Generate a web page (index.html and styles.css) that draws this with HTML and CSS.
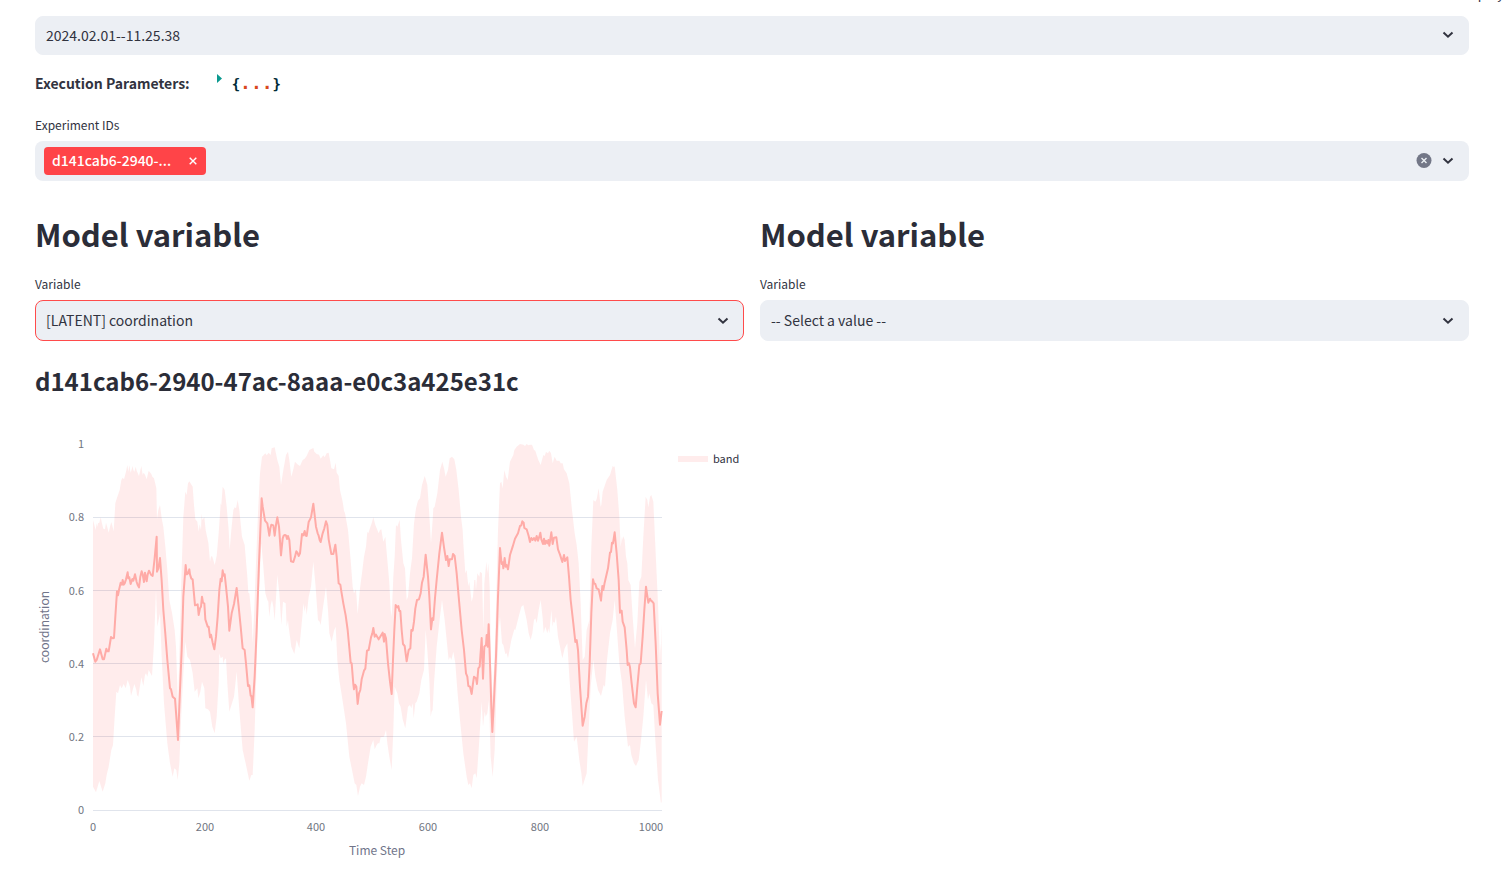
FILE: index.html
```html
<!DOCTYPE html>
<html lang="en">
<head>
<meta charset="utf-8">
<title>Experiment results</title>
<link rel="stylesheet" href="styles.css">
</head>
<body>
<header class="topbar"><button class="deploy" type="button">Deploy</button></header>
<main class="page">
  <div class="select select-run">
    <select aria-label="Run"><option>2024.02.01--11.25.38</option></select>
    <svg class="chevron" viewBox="0 0 12 8" aria-hidden="true"><path d="M1.5 1.5 6 5.7l4.5-4.2"/></svg>
  </div>

  <section class="params">
    <strong>Execution Parameters:</strong>
    <button class="json" type="button" aria-label="Expand parameters">
      <svg class="json-arrow" viewBox="0 0 5 9" aria-hidden="true"><path d="M0 0v9l5-4.5z"/></svg>
      <span class="json-body">{<span class="json-dots">...</span>}</span>
    </button>
  </section>

  <section class="field">
    <label class="label" for="experiments">Experiment IDs</label>
    <div class="multi">
      <span class="tag">
        <span class="tag-text">d141cab6-2940-...</span>
        <button class="tag-close" type="button" aria-label="Remove experiment"><svg viewBox="0 0 8 8"><path d="M.7.7l6.6 6.6M7.3.7L.7 7.3"/></svg></button>
      </span>
      <input class="multi-input" id="experiments" type="text">
      <button class="clear" type="button" aria-label="Clear all"><svg viewBox="0 0 16 16"><circle cx="8" cy="7.5" r="7.5"/><path d="M5.5 5l5 5M10.5 5l-5 5"/></svg></button>
      <svg class="chevron" viewBox="0 0 12 8" aria-hidden="true"><path d="M1.5 1.5 6 5.7l4.5-4.2"/></svg>
    </div>
  </section>

  <div class="columns">
    <section>
      <h1>Model variable</h1>
      <label class="label" for="var-left">Variable</label>
      <div class="select select-active">
        <select id="var-left"><option>[LATENT] coordination</option></select>
        <svg class="chevron" viewBox="0 0 12 8" aria-hidden="true"><path d="M1.5 1.5 6 5.7l4.5-4.2"/></svg>
      </div>
      <h2>d141cab6-2940-47ac-8aaa-e0c3a425e31c</h2>
      <svg class="chart" viewBox="0 0 709 450" role="img" aria-label="Coordination over time">
        <g class="grid">
          <path d="M58 97.5h569M58 170.5h569M58 243.5h569M58 316.5h569M58 390.5h569"/>
        </g>
        <g transform="translate(45 10) scale(.33333)">
          <path class="band" d="M39 270L47 300 50 280 52 290 54 280 58 278 62 262 66 280 70 296 75 298 78 278 82 292 86 308 90 290 94 276 98 292 101 304 106 220 110 206 114 195 119 180 124 150 128 143 132 148 138 125 142 105 145 125 148 106 152 128 158 108 160 120 163 125 167 110 170 122 177 138 184 108 188 135 191 128 195 134 200 148 206 122 214 132 217 140 222 145 229 175 231 268 235 240 240 225 245 265 250 290 256 350 262 420 268 510 276 548 284 600 288 650 294 830 298 680 304 450 310 260 316 185 320 195 324 160 328 154 338 170 342 225 346 268 352 275 356 305 359 283 363 300 365 250 367 270 373 262 377 300 385 338 390 395 393 380 396 378 400 390 404 405 410 378 416 310 422 220 424 225 428 170 434 180 440 230 446 300 449 360 454 300 460 240 464 232 468 235 473 210 478 240 486 320 494 345 502 440 505 488 508 490 515 560 518 640 522 560 528 400 534 250 540 130 546 80 556 70 560 76 566 68 572 75 575 55 584 52 592 90 598 110 603 165 610 120 618 75 624 65 628 90 634 140 640 118 642 108 645 95 652 103 660 108 668 90 674 86 680 78 688 60 700 54 703 65 710 72 717 74 722 86 730 76 734 82 740 70 746 68 750 90 754 115 762 118 767 98 770 128 776 138 780 180 788 215 792 242 795 250 804 300 812 390 818 470 822 490 828 478 833 552 840 475 846 430 852 380 858 350 862 305 865 310 868 300 875 280 880 262 886 285 896 310 900 300 904 298 910 335 916 320 922 390 928 460 932 540 935 560 940 440 944 380 948 285 952 290 959 270 963 330 970 400 975 415 980 510 984 500 990 430 996 385 1002 280 1008 235 1012 220 1014 212 1020 205 1026 165 1034 138 1037 147 1042 165 1047 240 1053 340 1058 270 1060 235 1064 230 1072 190 1080 120 1087 95 1092 115 1097 140 1104 120 1109 85 1116 80 1123 88 1129 120 1136 180 1143 260 1148 300 1150 340 1156 430 1160 420 1162 440 1165 468 1168 455 1175 515 1179 500 1183 450 1186 450 1188 480 1192 430 1198 440 1200 425 1206 430 1210 600 1213 460 1219 395 1222 430 1225 400 1229 470 1233 700 1237 800 1243 700 1249 500 1254 300 1260 160 1264 155 1268 175 1273 120 1278 140 1283 150 1290 95 1300 75 1303 60 1310 50 1320 42 1330 44 1335 48 1340 42 1345 46 1350 44 1356 44 1362 60 1366 62 1370 75 1375 90 1382 105 1390 75 1394 78 1398 66 1404 70 1408 62 1413 70 1418 100 1424 80 1430 92 1438 92 1442 100 1448 100 1452 118 1460 130 1468 160 1476 240 1484 310 1490 345 1496 400 1502 520 1508 690 1514 680 1520 600 1528 570 1534 350 1540 210 1546 215 1550 208 1556 175 1562 230 1564 225 1568 185 1580 150 1590 135 1598 108 1602 112 1604 108 1612 180 1618 260 1622 350 1626 320 1628 330 1630 318 1634 330 1638 380 1642 400 1645 450 1652 465 1658 560 1665 655 1672 580 1678 455 1684 440 1690 320 1697 200 1702 210 1705 232 1710 200 1714 195 1720 215 1727 370 1734 520 1740 700 1742 640 1743 660 1745 580V1115L1743 1120 1734 1050 1726 930 1720 825 1714 820 1708 790 1704 810 1698 750 1690 860 1682 940 1676 990 1668 1008 1662 1000 1654 975 1650 945 1644 950 1634 860 1626 760 1618 700 1610 590 1604 510 1598 570 1590 610 1580 700 1575 770 1571 765 1563 798 1554 780 1546 740 1540 690 1532 770 1526 900 1520 1030 1508 1068 1504 1030 1498 990 1490 920 1482 935 1476 850 1468 740 1462 640 1454 655 1447 685 1434 620 1428 560 1424 578 1420 575 1418 590 1414 540 1408 610 1405 595 1402 610 1396 590 1391 610 1388 565 1382 510 1376 540 1370 580 1366 565 1362 570 1357 610 1352 630 1346 610 1340 570 1330 525 1324 530 1316 560 1306 600 1303 598 1294 630 1284 685 1280 670 1276 672 1270 645 1266 640 1260 560 1256 600 1250 760 1244 960 1238 1040 1232 980 1227 810 1222 850 1217 860 1214 845 1209 890 1205 815 1196 960 1190 1045 1186 1030 1180 1035 1175 1075 1170 1060 1165 1065 1160 1040 1150 970 1140 870 1132 780 1126 700 1120 665 1114 690 1110 680 1106 690 1102 650 1094 570 1086 510 1080 560 1070 650 1062 760 1058 840 1055 845 1052 860 1048 750 1042 660 1037 600 1032 720 1024 750 1018 790 1010 815 1006 820 1001 865 998 820 994 835 990 825 984 830 976 895 968 868 962 830 957 820 952 790 944 770 940 900 935 1020 928 980 922 940 918 900 912 920 902 922 898 940 894 940 890 945 884 958 880 930 872 950 864 1000 858 1040 852 1065 845 1060 840 1070 834 1098 829 1065 824 1060 818 1030 808 980 798 880 786 800 778 750 772 690 767 590 762 602 755 635 748 610 744 540 738 470 728 540 722 585 719 575 714 570 706 460 700 395 693 470 686 500 680 555 677 525 674 545 670 520 668 550 658 655 650 630 643 672 634 650 626 590 624 570 620 590 617 520 609 515 604 585 598 490 592 435 584 572 580 530 576 510 572 525 568 560 565 515 562 510 556 490 550 410 544 340 536 500 530 700 524 900 518 1035 514 1035 508 1052 498 1005 488 960 478 840 470 725 462 800 448 845 442 760 438 685 433 690 430 702 428 680 422 685 418 670 416 760 410 860 404 910 397 890 390 845 384 838 376 835 373 775 366 755 361 785 355 805 352 775 344 785 338 730 330 690 322 680 316 635 310 730 304 850 298 1000 293 1050 289 1020 283 1015 278 1040 270 1000 262 940 252 820 245 680 240 550 232 590 228 480 222 640 216 738 206 720 202 740 198 730 195 735 190 768 184 742 175 800 171 795 169 780 163 762 153 798 150 770 143 750 137 775 131 762 125 775 120 765 114 790 109 785 104 860 99 945 94 960 86 1010 80 1035 76 1060 68 1085 58 1053 48 1087 39 1070Z"/>
          <path class="mean" d="M39 670L46 695 50 690 60 658 68 688 72 688 79 656 82 664 86 664 93 621 98 625 102 624 106 560 111 484 114 496 117 480 122 458 126 464 128 450 131 464 134 460 138 448 143 427 145 445 148 442 152 462 157 447 160 452 165 433 170 456 173 465 177 472 181 440 185 424 188 433 192 456 195 428 200 454 203 434 207 422 213 434 218 438 224 384 230 320 231 425 235 416 240 384 245 452 250 540 256 612 262 690 270 775 273 778 278 800 285 806 289 860 294 930 298 830 305 660 310 500 317 405 320 433 324 430 328 418 330 433 334 446 338 448 345 526 353 523 356 555 360 535 363 530 366 500 369 518 373 520 376 568 383 590 386 590 390 622 393 614 398 638 403 658 408 620 413 560 418 480 422 446 425 454 428 421 431 437 434 433 438 470 444 530 448 602 455 550 462 522 470 474 476 530 482 590 488 655 494 660 498 700 504 768 508 766 512 797 514 797 518 832 524 740 530 600 537 400 545 205 548 230 555 272 562 280 564 292 568 317 571 295 574 284 580 286 584 317 588 285 592 262 597 290 603 376 608 326 611 317 615 315 618 316 621 327 624 318 628 330 633 394 640 396 645 380 649 364 652 367 656 378 660 370 666 312 670 316 674 303 677 317 680 318 686 276 693 262 700 221 708 290 713 310 716 317 719 330 722 336 728 310 733 295 738 274 742 285 746 328 754 372 760 372 766 344 770 380 776 460 781 464 784 484 790 520 797 556 803 600 808 654 812 698 815 700 820 762 822 778 825 764 829 770 833 822 837 790 841 780 845 748 852 722 856 716 861 662 866 660 873 622 877 610 880 594 884 620 888 614 896 628 902 618 908 608 912 635 914 612 918 625 924 700 930 755 935 792 939 690 943 600 947 525 952 532 955 528 958 543 961 543 965 600 969 642 974 648 980 694 986 660 991 655 994 600 998 602 1002 575 1006 535 1011 510 1017 508 1022 490 1026 458 1031 440 1037 374 1044 440 1048 500 1053 598 1057 565 1060 570 1065 504 1070 450 1078 370 1086 308 1092 352 1098 390 1102 378 1106 408 1109 388 1116 388 1119 372 1124 378 1130 430 1136 500 1145 600 1152 660 1158 730 1162 740 1165 768 1170 770 1175 792 1179 760 1182 740 1188 745 1191 762 1195 715 1199 710 1205 624 1209 746 1213 650 1218 645 1220 615 1223 650 1226 583 1230 700 1234 830 1237 906 1242 810 1248 680 1254 500 1260 354 1265 402 1268 397 1270 415 1274 384 1277 410 1280 405 1284 418 1290 375 1298 350 1305 326 1314 310 1320 288 1324 286 1327 274 1331 278 1333 294 1340 298 1346 318 1350 336 1354 324 1358 330 1362 324 1366 332 1370 318 1374 332 1378 320 1381 308 1384 328 1389 342 1392 326 1395 342 1398 332 1402 340 1405 330 1408 347 1414 307 1418 342 1422 323 1429 322 1434 358 1440 374 1447 396 1452 375 1455 393 1462 382 1467 440 1472 510 1480 580 1486 636 1490 630 1494 660 1500 770 1508 887 1514 860 1519 820 1524 800 1529 700 1534 550 1539 448 1542 460 1546 462 1550 475 1556 478 1563 512 1567 468 1570 480 1574 458 1584 415 1590 368 1593 366 1596 338 1599 340 1604 307 1610 370 1616 450 1620 548 1625 542 1628 575 1634 592 1640 660 1643 705 1647 700 1650 712 1655 760 1662 820 1667 832 1672 770 1678 705 1682 700 1688 620 1693 540 1698 470 1701 492 1705 518 1710 506 1713 512 1717 515 1721 520 1727 640 1733 790 1740 884 1745 843"/>
        </g>
        <g class="ticks ticks-y">
          <text x="49" y="28">1</text><text x="49" y="101">0.8</text><text x="49" y="175">0.6</text>
          <text x="49" y="248">0.4</text><text x="49" y="321">0.2</text><text x="49" y="394">0</text>
        </g>
        <g class="ticks">
          <text x="58" y="411">0</text><text x="170" y="411">200</text><text x="281" y="411">400</text>
          <text x="393" y="411">600</text><text x="505" y="411">800</text><text x="616" y="411">1000</text>
        </g>
        <text class="axis-title" x="342" y="435">Time Step</text>
        <text class="axis-title" transform="translate(14 207) rotate(-90)">coordination</text>
        <path class="band" d="M643 36h30v6h-30z"/>
        <text class="legend" x="678" y="43">band</text>
      </svg>
    </section>
    <section>
      <h1>Model variable</h1>
      <label class="label" for="var-right">Variable</label>
      <div class="select">
        <select id="var-right"><option>-- Select a value --</option></select>
        <svg class="chevron" viewBox="0 0 12 8" aria-hidden="true"><path d="M1.5 1.5 6 5.7l4.5-4.2"/></svg>
      </div>
    </section>
  </div>
</main>
</body>
</html>
```

FILE: styles.css
```css
* { box-sizing: border-box; }
body {
  margin: 0;
  background: #fff;
  color: #31333f;
  font-family: "Noto Sans CJK SC", "Noto Sans", sans-serif;
  font-size: 14px;
  line-height: 24px;
}
button, select, input { font: inherit; color: inherit; border: 0; padding: 0; background: none; }
h1, h2 { margin: 0; color: #2b2d38; font-weight: 700; }
.topbar { display: flex; justify-content: flex-end; height: 16px; padding-right: 5px; overflow: hidden; }
.deploy { height: 24px; margin-top: -18px; font-size: 13px; line-height: 24px; }
.page { padding: 0 40px 0 35px; }
.select { position: relative; height: 41px; border: 1px solid #eceff4; border-radius: 8px; background: #eceff4; }
.select-run { height: 39px; }
.select-active { border-color: #ff4b4b; }
.select select { display: block; width: 100%; height: 100%; padding: 0 40px 2px 10px; appearance: none; outline: 0; }
.chevron { width: 12px; height: 8px; fill: none; stroke: #31333f; stroke-width: 2; }
.select .chevron { position: absolute; right: 14px; top: 50%; margin-top: -4px; pointer-events: none; }
.select-run .chevron { margin-top: -5px; }
.params { display: flex; align-items: center; gap: 27px; height: 24px; margin-top: 16px; }
.json { display: flex; align-items: center; gap: 10px; height: 24px; }
.json-arrow { width: 5px; height: 9px; margin-bottom: 9px; fill: #0b998f; }
.json-body { color: #002b36; font: 700 14px/22px "DejaVu Sans Mono", monospace; }
.json-dots { color: #d9481c; font-size: 18px; }
.field { margin-top: 18px; }
.label { display: block; height: 24px; margin-bottom: 4px; font-size: 12px; line-height: 24px; }
.multi { display: flex; align-items: center; height: 40px; padding: 0 15px 0 9px; border-radius: 8px; background: #eceff4; }
.tag { display: flex; align-items: center; gap: 15px; height: 28px; padding: 0 9px 0 8px; border-radius: 4px; background: #ff4448; color: #fff; font-weight: 500; }
.tag-text { width: 122px; line-height: 22px; padding-bottom: 2px; white-space: nowrap; }
.tag-close { display: flex; width: 8px; height: 8px; }
.tag-close svg { width: 8px; height: 8px; stroke: #fff; stroke-width: 1.4; }
.multi-input { flex: 1; min-width: 0; height: 32px; outline: 0; }
.clear { display: flex; width: 16px; height: 16px; margin-right: 10px; }
.clear svg { width: 16px; height: 16px; fill: #737787; }
.clear path { stroke: #ecf0f4; stroke-width: 1.4; }
.columns { display: grid; grid-template-columns: 1fr 1fr; gap: 16px; margin-top: 31px; }
.columns h1 { height: 60px; font-size: 31px; line-height: 44px; }
.columns h2 { margin-top: 20px; font-size: 24px; line-height: 40px; }
.chart { display: block; width: 100%; margin-top: 19px; }
.grid path { fill: none; stroke: #e0e4ec; stroke-width: 1; }
.band { fill: #ff2b2b; fill-opacity: .09; }
.mean { fill: none; stroke: #ffaba7; stroke-width: 6; stroke-linejoin: round; }
.ticks text { fill: #71757f; font-size: 11px; text-anchor: middle; }
.ticks-y text { text-anchor: end; }
.axis-title { fill: #71758a; font-size: 12px; text-anchor: middle; }
.legend { fill: #31333f; font-size: 11px; }
```
